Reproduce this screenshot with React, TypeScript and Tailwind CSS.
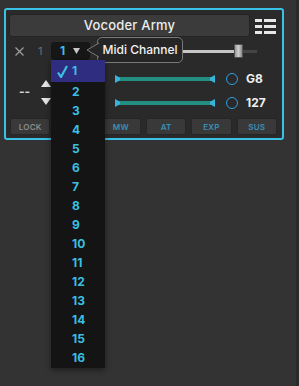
const channels = Array.from({ length: 16 }, (_, i) => i + 1);
const buttons = ['LOCK', '', 'MW', 'AT', 'EXP', 'SUS'];

function ListIcon() {
  return (
    <svg width="21" height="16" viewBox="0 0 21 16" className="shrink-0">
      {[1, 7, 13].map((y) => (
        <g key={y} fill="#e8e8e8">
          <rect x="0" y={y} width="7" height="3" />
          <rect x="9" y={y} width="12" height="3" />
        </g>
      ))}
    </svg>
  );
}

function TealSlider() {
  return (
    <div className="relative h-[8px] w-[100px] flex items-center">
      <div className="h-[4px] w-full bg-[#238f80]" />
      <div className="absolute left-0 top-0 h-[8px] w-[5px] bg-[#36b4dc] [clip-path:polygon(0_0,100%_35%,100%_65%,0_100%)]" />
      <div className="absolute right-0 top-0 h-[8px] w-[5px] bg-[#36b4dc] [clip-path:polygon(100%_0,0_35%,0_65%,100%_100%)]" />
    </div>
  );
}

export default function App() {
  return (
    <div className="relative h-[386px] w-[299px] overflow-hidden bg-[#333333] border-r-[3px] border-[#2a2a2a] font-['Inter',sans-serif]">
      {/* panel */}
      <div className="ml-[4px] mt-[8px] h-[132px] w-[280px] rounded-[3px] border-2 border-[#39c2e6] bg-[#2a2a2a] px-[3px] pt-[4px]">
        <div className="flex items-center gap-[5px]">
          <div className="flex h-[23px] w-[241px] items-center justify-center rounded-[3px] border border-[#242424] bg-[#3b3b3b] text-[13px] font-medium tracking-[0.2px] text-[#ececec]">
            Vocoder Army
          </div>
          <ListIcon />
        </div>

        <div className="mt-[5px] flex h-[18px] items-center">
          <svg width="9" height="9" viewBox="0 0 9 9" className="ml-[6px]">
            <path d="M0.5 0.5 L8.5 8.5 M8.5 0.5 L0.5 8.5" stroke="#9a9a9a" strokeWidth="1.3" />
          </svg>
          <span className="ml-[14px] w-[4px] text-[11px] leading-none text-[#707070]">1</span>
          <div className="ml-[9px] flex h-[18px] w-[39px] items-center rounded-[3px] bg-[#161616] pl-[9px]">
            <span className="text-[12px] font-bold leading-none text-[#3cbfe2]">1</span>
            <svg width="7" height="6" viewBox="0 0 7 6" className="ml-[8px]">
              <path d="M0 0 H7 L3.5 6 Z" fill="#c8c8c8" />
            </svg>
          </div>
          <div className="relative ml-[10px] flex h-[16px] w-[157px] items-center">
            <div className="h-[3px] w-[134px] bg-[#c6c6c6]" />
            <div className="h-[3px] flex-1 bg-[#444444]" />
            <div className="absolute left-[134px] top-[1px] h-[14px] w-[9px] rounded-[1px] bg-gradient-to-r from-[#9a9a9a] via-[#cfcfcf] to-[#8a8a8a] border border-[#555]" />
          </div>
        </div>

        <div className="mt-[7px] flex h-[48px]">
          <div className="flex w-[106px] items-center pt-[2px]">
            <span className="ml-[10px] text-[12px] font-bold leading-none text-[#d8d8d8]">--</span>
            <div className="ml-[11px] flex flex-col gap-[11px]">
              <svg width="10" height="7" viewBox="0 0 10 7">
                <path d="M0 7 L5 0 L10 7 Z" fill="#e6e6e6" />
              </svg>
              <svg width="10" height="7" viewBox="0 0 10 7">
                <path d="M0 0 H10 L5 7 Z" fill="#e6e6e6" />
              </svg>
            </div>
          </div>
          <div className="flex flex-col">
            {['G8', '127'].map((v) => (
              <div key={v} className="flex h-[24px] items-center">
                <TealSlider />
                <div className="ml-[11px] h-[12px] w-[12px] rounded-full border-[1.5px] border-[#2f9fe0]" />
                <span className="ml-[8px] text-[12px] font-bold leading-none text-[#f0f0f0]">{v}</span>
              </div>
            ))}
          </div>
        </div>

        <div className="ml-[1px] mt-[3px] grid w-[267px] grid-cols-6 gap-[5px]">
          {buttons.map((b, i) => (
            <div
              key={i}
              className={`flex h-[17px] items-center justify-center rounded-[2px] border border-[#262626] bg-[#393939] text-[8px] font-semibold tracking-wide ${
                i === 0 ? 'text-[#8c8c8c]' : 'text-[#3b8fb6]'
              }`}
            >
              {b}
            </div>
          ))}
        </div>
      </div>

      {/* tooltip */}
      <div className="absolute left-[97px] top-[37px] flex h-[26px] w-[86px] items-center justify-center rounded-[5px] border border-[#7a7a7a] bg-[#252525] text-[12px] font-medium text-[#f2f2f2]">
        <svg width="13" height="20" viewBox="0 0 13 20" className="absolute left-[-12px] top-[2px]">
          <path d="M13 3 L1 10 L13 17" fill="#252525" stroke="#7a7a7a" strokeWidth="1" />
        </svg>
        Midi Channel
      </div>

      {/* dropdown list */}
      <div className="absolute left-[51px] top-[60px] w-[54px] bg-[#141414] pb-[1px] shadow-[0_2px_6px_rgba(0,0,0,0.45)]">
        {channels.map((c) => (
          <div
            key={c}
            className={`flex items-center text-[12px] font-bold leading-none text-[#3cbfe2] ${
              c === 1 ? 'h-[22px] bg-[#2f2d80]' : 'h-[19px]'
            }`}
          >
            {c === 1 ? (
              <svg width="11" height="13" viewBox="0 0 11 13" className="ml-[6px] mr-[4px]">
                <path d="M1 7.5 L4 12 L10 1" fill="none" stroke="#3cbfe2" strokeWidth="2.2" />
              </svg>
            ) : (
              <span className="w-[21px]" />
            )}
            <span>{c}</span>
          </div>
        ))}
      </div>
    </div>
  );
}
